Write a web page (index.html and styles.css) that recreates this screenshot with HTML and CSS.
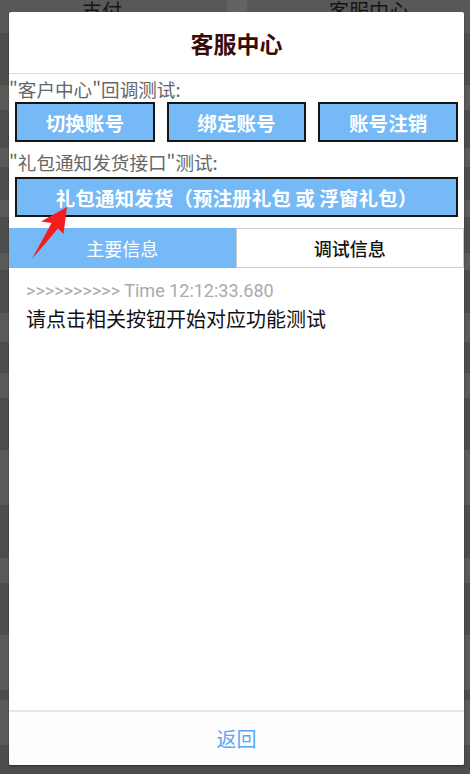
FILE: index.html
```html
<!DOCTYPE html>
<html lang="zh">
<head>
<meta charset="utf-8">
<title>客服中心</title>
<link rel="stylesheet" href="styles.css">
</head>
<body>
<div class="app">
  <div class="topbar">
    <div class="tb-btn tb-left">支付</div>
    <div class="tb-sep"></div>
    <div class="tb-btn tb-right">客服中心</div>
  </div>
  <div class="band dark h52"></div>
  <div class="band light h25"></div>
  <div class="band dark h38"></div>
  <div class="band light h19"></div>
  <div class="band dark h33"></div>
  <div class="band light h17"></div>
  <div class="band dark h36"></div>
  <div class="band light h17"></div>
  <div class="band dark h43"></div>
  <div class="band light h29"></div>
  <div class="band dark h31"></div>
  <div class="band light h25"></div>
  <div class="band dark h52"></div>
  <div class="band light h55"></div>
  <div class="band dark h53"></div>
  <div class="band light h25"></div>
  <div class="band dark h52"></div>
  <div class="band light h55"></div>
  <div class="band dark h10"></div>
  <div class="band light h45"></div>
  <div class="band dark h40"></div>
</div>

<div class="overlay">
  <div class="dialog">
    <div class="title">客服中心</div>
    <div class="content">
      <div class="label">"客户中心"回调测试:</div>
      <div class="btn-row">
        <div class="btn">切换账号</div>
        <div class="btn">绑定账号</div>
        <div class="btn">账号注销</div>
      </div>
      <div class="label label2">"礼包通知发货接口"测试:</div>
      <div class="btn-row">
        <div class="btn">礼包通知发货（预注册礼包 或 浮窗礼包）</div>
      </div>
      <div class="tabs">
        <div class="tab tab-active">主要信息</div>
        <div class="tab tab-idle">调试信息</div>
      </div>
      <div class="log">
        <div class="log-time">&gt;&gt;&gt;&gt;&gt;&gt;&gt;&gt;&gt;&gt; Time 12:12:33.680</div>
        <div class="log-msg">请点击相关按钮开始对应功能测试</div>
      </div>
    </div>
    <div class="footer">返回</div>
  </div>
  <svg class="arrow" width="470" height="774" viewBox="0 0 470 774">
    <polygon points="67,207 63.5,234 58,228.5 32,259 51.5,223 41,221.5" fill="#f41c1c"/>
  </svg>
</div>
</body>
</html>
```

FILE: styles.css
```css
html, body {
  margin: 0;
  padding: 0;
}

body {
  width: 470px;
  height: 774px;
  overflow: hidden;
  position: relative;
  background: #4c4c4c;
  font-family: "Noto Sans CJK SC", "Noto Sans", sans-serif;
}

/* dimmed application behind the dialog */
.app {
  display: flex;
  flex-direction: column;
}

.topbar {
  height: 33px;
  display: flex;
  background: #585858;
}

.tb-btn {
  display: flex;
  justify-content: center;
  font-size: 20px;
  line-height: 22px;
  color: #141414;
}

.tb-left {
  width: 227px;
  padding-right: 23px;
  box-sizing: border-box;
}

.tb-sep {
  width: 20px;
  background: #636363;
}

.tb-right {
  flex: 1;
  padding-left: 21px;
}

.band.dark { background: #4d4d4d; }
.band.light { background: #5a5a5a; }
.h10 { height: 10px; }
.h17 { height: 17px; }
.h19 { height: 19px; }
.h25 { height: 25px; }
.h29 { height: 29px; }
.h31 { height: 31px; }
.h33 { height: 33px; }
.h36 { height: 36px; }
.h38 { height: 38px; }
.h40 { height: 40px; }
.h43 { height: 43px; }
.h45 { height: 45px; }
.h52 { height: 52px; }
.h53 { height: 53px; }
.h55 { height: 55px; }

/* overlay dialog */
.overlay {
  position: absolute;
  inset: 0;
  padding: 12px 6px 9px 9px;
  display: flex;
}

.dialog {
  flex: 1;
  display: flex;
  flex-direction: column;
  background: #ffffff;
  border-radius: 2px;
  overflow: hidden;
  box-shadow: 0 1px 2px rgba(0, 0, 0, 0.45);
}

.title {
  height: 61px;
  flex: none;
  display: flex;
  align-items: center;
  justify-content: center;
  font-size: 23px;
  font-weight: 700;
  color: #3a0b0b;
  border-bottom: 1px solid #dedede;
}

.content {
  flex: 1;
  display: flex;
  flex-direction: column;
}

.label {
  margin-top: 4px;
  font-size: 18.6px;
  line-height: 22px;
  color: #666666;
}

.label2 {
  margin-top: 9px;
}

.btn-row {
  display: flex;
  gap: 12px;
  padding: 0 6px;
  margin-top: 2px;
}

.label2 + .btn-row {
  margin-top: 4px;
}

.btn {
  flex: 1;
  height: 40px;
  box-sizing: border-box;
  border: 2px solid #161616;
  background: #75b9f7;
  color: #ffffff;
  font-size: 19.6px;
  font-weight: 700;
  display: flex;
  align-items: center;
  justify-content: center;
  white-space: nowrap;
}

.tabs {
  display: flex;
  height: 40px;
  margin-top: 11px;
}

.tab {
  flex: 1;
  box-sizing: border-box;
  display: flex;
  align-items: center;
  justify-content: center;
  font-size: 18px;
  font-weight: 500;
}

.tab-active {
  background: #75b9f7;
  color: #ffffff;
  font-weight: 400;
}

.tab-idle {
  border: 1px solid #cccccc;
  color: #111111;
}

.log {
  flex: 1;
  padding: 12px 17px 0;
}

.log-time {
  font-family: Roboto, "Noto Sans", sans-serif;
  font-size: 18px;
  line-height: 22px;
  color: #aaaaaa;
}

.log-msg {
  margin-top: 3px;
  font-size: 20px;
  line-height: 28px;
  color: #111111;
}

.footer {
  height: 53px;
  flex: none;
  border-top: 2px solid #e6e6e6;
  background: #fdfdfd;
  display: flex;
  align-items: center;
  justify-content: center;
  font-size: 20px;
  color: #5aa8f2;
}

.arrow {
  position: absolute;
  left: 0;
  top: 0;
  pointer-events: none;
}
```
